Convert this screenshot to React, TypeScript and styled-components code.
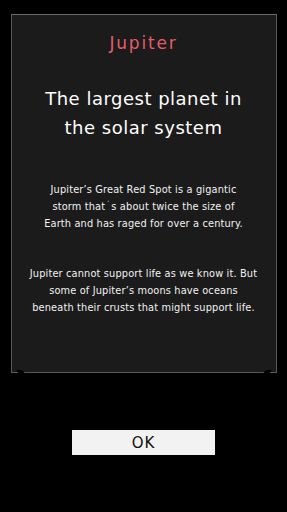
import React from "react";
import styled, { createGlobalStyle } from "styled-components";

const Global = createGlobalStyle`
  html, body { margin: 0; padding: 0; background: #000; }
  body { width: 287px; height: 512px; overflow: hidden; }
  * { box-sizing: border-box; }
`;

const Screen = styled.div`
  width: 287px;
  height: 512px;
  background: #000;
  display: flex;
  flex-direction: column;
  align-items: center;
  padding-top: 14px;
  font-family: "DejaVu Sans", "Liberation Sans", sans-serif;
`;

const Panel = styled.div`
  position: relative;
  width: 266px;
  height: 359px;
  background: #1b1b1b;
  border: 1px solid #5a5a5a;
  border-top-color: #6a6a6a;
  display: flex;
  flex-direction: column;
  align-items: center;
  padding-top: 17px;
`;

const Notch = styled.span<{ $side: "left" | "right" }>`
  position: absolute;
  bottom: -3px;
  ${(p) => (p.$side === "left" ? "left: 6px;" : "right: 6px;")}
  width: 6px;
  height: 5px;
  background: #000;
  transform: skewX(${(p) => (p.$side === "left" ? "40deg" : "-40deg")});
`;

const Title = styled.div`
  color: #e35d68;
  font-size: 17px;
  letter-spacing: 1.8px;
  line-height: 22px;
`;

const Heading = styled.div`
  margin-top: 30px;
  color: #ffffff;
  font-size: 18px;
  line-height: 29px;
  text-align: center;
  letter-spacing: 0.5px;
`;

const Paragraph = styled.p<{ $gap: number }>`
  margin: ${(p) => p.$gap}px 0 0;
  color: #f2f2f2;
  font-size: 9.8px;
  line-height: 17px;
  text-align: center;
  letter-spacing: 0.15px;
  white-space: nowrap;
`;

const Raised = styled.span`
  position: relative;
  top: -5px;
  padding: 0 2px;
  font-size: 6px;
  line-height: 0;
`;

const Button = styled.button`
  margin-top: 57px;
  width: 143px;
  height: 25px;
  border: none;
  background: #f2f2f2;
  color: #111;
  font-family: "DejaVu Sans", "Liberation Sans", sans-serif;
  font-size: 15px;
  letter-spacing: 1px;
  padding: 0;
  display: flex;
  align-items: center;
  justify-content: center;
`;

export default function App() {
  return (
    <>
      <Global />
      <Screen>
        <Panel>
          <Title>Jupiter</Title>
          <Heading>
            The largest planet in
            <br />
            the solar system
          </Heading>
          <Paragraph $gap={39}>
            Jupiter’s Great Red Spot is a gigantic
            <br />
            storm that<Raised>’</Raised>s about twice the size of
            <br />
            Earth and has raged for over a century.
          </Paragraph>
          <Paragraph $gap={33}>
            Jupiter cannot support life as we know it. But
            <br />
            some of Jupiter’s moons have oceans
            <br />
            beneath their crusts that might support life.
          </Paragraph>
          <Notch $side="left" />
          <Notch $side="right" />
        </Panel>
        <Button>OK</Button>
      </Screen>
    </>
  );
}
